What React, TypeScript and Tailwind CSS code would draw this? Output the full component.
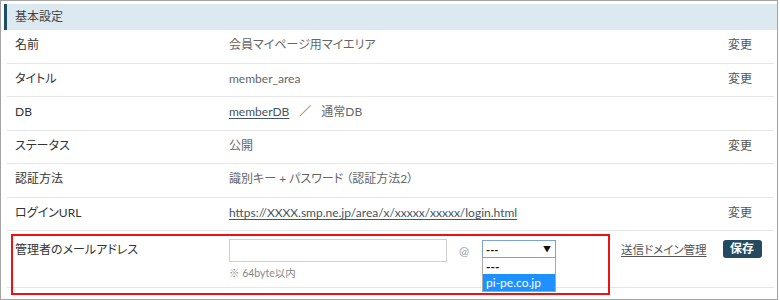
const font = "font-['Lato','Noto_Sans_CJK_JP',sans-serif] [font-feature-settings:'palt']"

interface Row {
  label: string
  value: React.ReactNode
  edit?: boolean
}

const rows: Row[] = [
  { label: '名前', value: '会員マイページ用マイエリア', edit: true },
  { label: 'タイトル', value: 'member_area', edit: true },
  {
    label: 'DB',
    value: (
      <span className="flex items-center">
        <span className="text-[#445560] underline underline-offset-2">memberDB</span>
        <span className="mx-[10px]">／</span>
        <span>通常DB</span>
      </span>
    ),
  },
  { label: 'ステータス', value: '公開', edit: true },
  { label: '認証方法', value: '識別キー + パスワード （認証方法2）' },
  {
    label: 'ログインURL',
    value: (
      <span className="text-[#445560] underline underline-offset-2">
        https://XXXX.smp.ne.jp/area/x/xxxxx/xxxxx/login.html
      </span>
    ),
    edit: true,
  },
]

function InfoRow({ label, value, edit }: Row) {
  return (
    <div className="flex h-[33.5px] items-center border-b border-[#e6e6e6] pb-[2px] pl-[8px] pr-[22px]">
      <span className="w-[214px] text-[#333]">{label}</span>
      <span className="flex-1 text-[#666]">{value}</span>
      {edit && <span className="text-[#555]">変更</span>}
    </div>
  )
}

function MailRow() {
  return (
    <div className="relative flex h-[57px] items-start border-b border-[#e6e6e6] pl-[8px] pt-[8px]">
      <span className="mt-[2px] w-[214px] text-[#333]">管理者のメールアドレス</span>
      <div className="flex flex-col">
        <div className="h-[23px] w-[218px] border border-[#cfcfcf] bg-white" />
        <span className="mt-[4px] text-[10.5px] text-[#888]">※ 64byte以内</span>
      </div>
      <span className="ml-[12px] mt-[3px] text-[#999]">@</span>
      <div className="relative ml-[13px] mt-[1px]">
        <div className="flex h-[18px] w-[74px] items-center justify-between border border-[#7ea2d6] bg-white pl-[3px] pr-[4px] text-[11px] text-[#111]">
          <span className="font-bold leading-none">---</span>
          <span className="text-[8px] leading-none">▼</span>
        </div>
        <div className="absolute left-0 top-[18px] w-[74px] border border-[#aaa] border-t-0 bg-white text-[12px] leading-[15px]">
          <div className="px-[3px] pt-[1px] font-bold text-[#111]">---</div>
          <div className="bg-[#1e90ff] px-[3px] py-[1px] text-white">pi-pe.co.jp</div>
        </div>
      </div>
      <span className="ml-[65px] mt-[2px] text-[11.5px] text-[#555] underline underline-offset-2">送信ドメイン管理</span>
      <button
        type="button"
        className="ml-[16px] mt-[1px] h-[18px] w-[39px] rounded-[3px] bg-[#234a5e] text-[12px] font-bold leading-none text-white"
      >
        保存
      </button>
      <div className="pointer-events-none absolute left-[4px] top-[3px] h-[61px] w-[599px] border-2 border-[#ee1111]" />
    </div>
  )
}

export default function App() {
  return (
    <div className={`${font} h-[300px] w-[778px] border border-[#a4a4a4] bg-white pl-[3px] pt-[3px] text-[12px]`}>
      <div className="flex h-[26px] items-center bg-[#dce9f0]">
        <span className="h-full w-[3px] bg-[#1d4e63]" />
        <span className="ml-[8px] text-[#444]">基本設定</span>
      </div>
      <div className="mx-[3px]">
        {rows.map((r) => (
          <InfoRow key={r.label} {...r} />
        ))}
        <MailRow />
      </div>
    </div>
  )
}
